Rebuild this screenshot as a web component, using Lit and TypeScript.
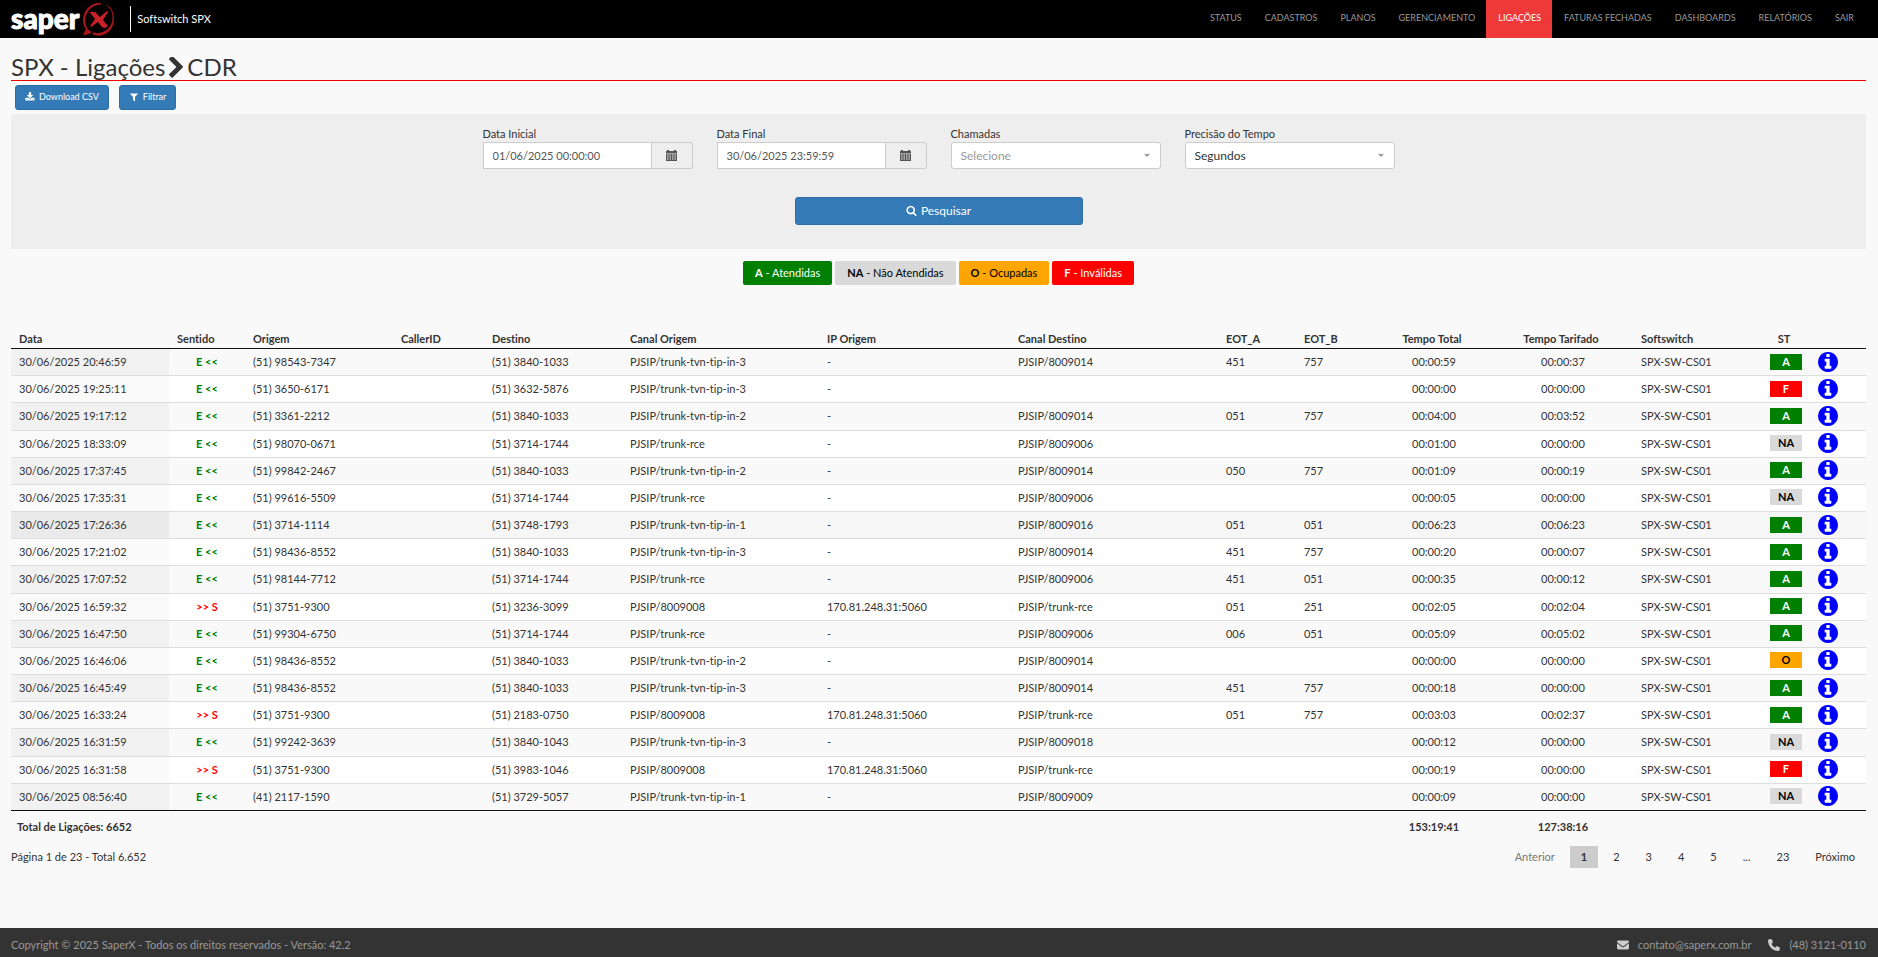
import { LitElement, html, css, svg } from "lit";
import { customElement, state } from "lit/decorators.js";
import { classMap } from "lit/directives/class-map.js";
import { styleMap } from "lit/directives/style-map.js";

type Status = "A" | "NA" | "O" | "F";

interface Call {
  date: string;
  out: boolean;
  from: string;
  to: string;
  channelFrom: string;
  ip: string;
  channelTo: string;
  eotA: string;
  eotB: string;
  total: string;
  billed: string;
  status: Status;
}

const NAV = [
  "Status",
  "Cadastros",
  "Planos",
  "Gerenciamento",
  "Ligações",
  "Faturas Fechadas",
  "Dashboards",
  "Relatórios",
  "Sair",
];

/* Heading, relative width and header alignment of each table column. */
const COLUMNS: Array<{ label: string; weight: number; center?: boolean }> = [
  { label: "Data", weight: 158 },
  { label: "Sentido", weight: 76 },
  { label: "Origem", weight: 148 },
  { label: "CallerID", weight: 91 },
  { label: "Destino", weight: 138 },
  { label: "Canal Origem", weight: 197 },
  { label: "IP Origem", weight: 191 },
  { label: "Canal Destino", weight: 208 },
  { label: "EOT_A", weight: 78 },
  { label: "EOT_B", weight: 79 },
  { label: "Tempo Total", weight: 118, center: true },
  { label: "Tempo Tarifado", weight: 140, center: true },
  { label: "Softswitch", weight: 129 },
  { label: "ST", weight: 48, center: true },
  { label: "", weight: 56 },
];
const TOTAL_WEIGHT = COLUMNS.reduce((sum, c) => sum + c.weight, 0);

const row = (
  time: string,
  out: boolean,
  from: string,
  to: string,
  channelFrom: string,
  channelTo: string,
  eotA: string,
  eotB: string,
  total: string,
  billed: string,
  status: Status
): Call => ({
  date: `30/06/2025 ${time}`,
  out,
  from,
  to,
  channelFrom: `PJSIP/${channelFrom}`,
  ip: out ? "170.81.248.31:5060" : "-",
  channelTo: channelTo ? `PJSIP/${channelTo}` : "",
  eotA,
  eotB,
  total,
  billed,
  status,
});

const CALLS: Call[] = [
  row("20:46:59", false, "(51) 98543-7347", "(51) 3840-1033", "trunk-tvn-tip-in-3", "8009014", "451", "757", "00:00:59", "00:00:37", "A"),
  row("19:25:11", false, "(51) 3650-6171", "(51) 3632-5876", "trunk-tvn-tip-in-3", "", "", "", "00:00:00", "00:00:00", "F"),
  row("19:17:12", false, "(51) 3361-2212", "(51) 3840-1033", "trunk-tvn-tip-in-2", "8009014", "051", "757", "00:04:00", "00:03:52", "A"),
  row("18:33:09", false, "(51) 98070-0671", "(51) 3714-1744", "trunk-rce", "8009006", "", "", "00:01:00", "00:00:00", "NA"),
  row("17:37:45", false, "(51) 99842-2467", "(51) 3840-1033", "trunk-tvn-tip-in-2", "8009014", "050", "757", "00:01:09", "00:00:19", "A"),
  row("17:35:31", false, "(51) 99616-5509", "(51) 3714-1744", "trunk-rce", "8009006", "", "", "00:00:05", "00:00:00", "NA"),
  row("17:26:36", false, "(51) 3714-1114", "(51) 3748-1793", "trunk-tvn-tip-in-1", "8009016", "051", "051", "00:06:23", "00:06:23", "A"),
  row("17:21:02", false, "(51) 98436-8552", "(51) 3840-1033", "trunk-tvn-tip-in-3", "8009014", "451", "757", "00:00:20", "00:00:07", "A"),
  row("17:07:52", false, "(51) 98144-7712", "(51) 3714-1744", "trunk-rce", "8009006", "451", "051", "00:00:35", "00:00:12", "A"),
  row("16:59:32", true, "(51) 3751-9300", "(51) 3236-3099", "8009008", "trunk-rce", "051", "251", "00:02:05", "00:02:04", "A"),
  row("16:47:50", false, "(51) 99304-6750", "(51) 3714-1744", "trunk-rce", "8009006", "006", "051", "00:05:09", "00:05:02", "A"),
  row("16:46:06", false, "(51) 98436-8552", "(51) 3840-1033", "trunk-tvn-tip-in-2", "8009014", "", "", "00:00:00", "00:00:00", "O"),
  row("16:45:49", false, "(51) 98436-8552", "(51) 3840-1033", "trunk-tvn-tip-in-3", "8009014", "451", "757", "00:00:18", "00:00:00", "A"),
  row("16:33:24", true, "(51) 3751-9300", "(51) 2183-0750", "8009008", "trunk-rce", "051", "757", "00:03:03", "00:02:37", "A"),
  row("16:31:59", false, "(51) 99242-3639", "(51) 3840-1043", "trunk-tvn-tip-in-3", "8009018", "", "", "00:00:12", "00:00:00", "NA"),
  row("16:31:58", true, "(51) 3751-9300", "(51) 3983-1046", "8009008", "trunk-rce", "", "", "00:00:19", "00:00:00", "F"),
  row("08:56:40", false, "(41) 2117-1590", "(51) 3729-5057", "trunk-tvn-tip-in-1", "8009009", "", "", "00:00:09", "00:00:00", "NA"),
];

const LEGEND: Array<{ code: Status; label: string }> = [
  { code: "A", label: "Atendidas" },
  { code: "NA", label: "Não Atendidas" },
  { code: "O", label: "Ocupadas" },
  { code: "F", label: "Inválidas" },
];

const ICONS: Record<string, { box: string; d: string }> = {
  download: {
    box: "0 0 1792 1792",
    d: "M1344 1344q0-26-19-45t-45-19-45 19-19 45 19 45 45 19 45-19 19-45zm256 0q0-26-19-45t-45-19-45 19-19 45 19 45 45 19 45-19 19-45zm128-224v320q0 40-28 68t-68 28h-1472q-40 0-68-28t-28-68v-320q0-40 28-68t68-28h465l135 136q58 56 136 56t136-56l136-136h464q40 0 68 28t28 68zm-325-569q17 41-14 70l-448 448q-18 19-45 19t-45-19l-448-448q-31-29-14-70 17-39 59-39h256v-448q0-26 19-45t45-19h256q26 0 45 19t19 45v448h256q42 0 59 39z",
  },
  filter: {
    box: "0 0 1792 1792",
    d: "M1595 295q17 41-14 70l-493 493v742q0 42-39 59-13 5-25 5-27 0-45-19l-256-256q-19-19-19-45v-486l-493-493q-31-29-14-70 17-39 59-39h1280q42 0 59 39z",
  },
  search: {
    box: "0 0 1792 1792",
    d: "M1216 832q0-185-131.500-316.500t-316.500-131.500-316.500 131.500-131.500 316.500 131.500 316.500 316.500 131.500 316.500-131.500 131.500-316.500zm512 832q0 52-38 90t-90 38q-54 0-90-38l-343-342q-179 124-399 124-143 0-273.500-55.500t-225-150-150-225-55.500-273.500 55.500-273.500 150-225 225-150 273.500-55.500 273.500 55.500 225 150 150 225 55.500 273.500q0 220-124 399l343 343q37 37 37 90z",
  },
  chevron: {
    box: "346 100 1036 1556",
    d: "M1363 877l-742 742q-19 19-45 19t-45-19l-166-166q-19-19-19-45t19-45l531-531-531-531q-19-19-19-45t19-45l166-166q19-19 45-19t45 19l742 742q19 19 19 45t-19 45z",
  },
  info: {
    box: "128 128 1536 1536",
    d: "M1152 1376v-160q0-14-9-23t-23-9h-96v-512q0-14-9-23t-23-9h-320q-14 0-23 9t-9 23v160q0 14 9 23t23 9h96v320h-96q-14 0-23 9t-9 23v160q0 14 9 23t23 9h448q14 0 23-9t9-23zm-128-896v-160q0-14-9-23t-23-9h-192q-14 0-23 9t-9 23v160q0 14 9 23t23 9h192q14 0 23-9t9-23zm640 416q0 209-103 385.500t-279.500 279.500-385.500 103-385.500-103-279.500-279.500-103-385.500 103-385.500 279.500-279.500 385.500-103 385.500 103 279.500 279.500 103 385.500z",
  },
  calendar: {
    box: "0 0 11 11",
    d: "M0 1h1V0h2v1h5V0h2v1h1v2H0zM0 3.500h11V11H0zM1 4.500v1h1.500v-1zm2.500 0v1H5v-1zm2.500 0v1h1.500v-1zm2.500 0v1H10v-1zM1 6.500v1h1.500v-1zm2.500 0v1H5v-1zm2.500 0v1h1.500v-1zm2.500 0v1H10v-1zM1 8.500v1h1.500v-1zm2.500 0v1H5v-1zm2.500 0v1h1.500v-1zm2.500 0v1H10v-1z",
  },
  envelope: {
    box: "0 0 512 512",
    d: "M48 64C21.500 64 0 85.500 0 112c0 15.100 7.100 29.300 19.200 38.400L236.800 313.600c11.400 8.500 27 8.500 38.400 0L492.800 150.400c12.100-9.100 19.200-23.300 19.200-38.400c0-26.500-21.500-48-48-48H48zM0 176V384c0 35.300 28.700 64 64 64H448c35.300 0 64-28.700 64-64V176L294.400 339.200c-22.800 17.100-54 17.100-76.800 0L0 176z",
  },
  phone: {
    box: "0 0 512 512",
    d: "M164.900 24.600c-7.700-18.600-28-28.500-47.400-23.200l-88 24C12.100 30.200 0 46 0 64C0 311.400 200.600 512 448 512c18 0 33.800-12.100 38.600-29.500l24-88c5.300-19.400-4.600-39.700-23.200-47.400l-96-40c-16.300-6.800-35.200-2.100-46.300 11.600L304.700 368C234.300 334.700 177.300 277.700 144 207.300L193.300 167c13.700-11.200 18.400-30 11.600-46.300l-40-96z",
  },
};

const icon = (name: string) => html`<svg
  class="icon icon-${name}"
  viewBox=${ICONS[name].box}
  aria-hidden="true"
>
  ${svg`<path fill-rule="evenodd" d=${ICONS[name].d}></path>`}
</svg>`;

@customElement("app-root")
export class AppRoot extends LitElement {
  @state() private page = 1;
  @state() private highlighted = 6;

  static styles = css`
    :host {
      display: flex;
      flex-direction: column;
      min-height: 100vh;
      background: #f9f9f9;
      color: #333;
      font: 11px/17px Lato, "Open Sans", sans-serif;
      font-variant-ligatures: none;
    }
    *,
    *::before {
      box-sizing: border-box;
    }
    a {
      color: inherit;
      text-decoration: none;
    }
    button,
    input,
    select {
      font: inherit;
      margin: 0;
    }
    .icon {
      width: 12px;
      height: 12px;
      fill: currentColor;
      flex: none;
    }

    .topbar {
      display: flex;
      align-items: stretch;
      justify-content: space-between;
      height: 38px;
      padding: 0 13px 0 11px;
      background: #000;
      color: #fff;
    }
    .brand {
      display: flex;
      align-items: center;
    }
    .wordmark {
      font: 900 28px/32px Lato, sans-serif;
      -webkit-text-stroke: 1px #fff;
      margin-bottom: 2px;
    }
    .emblem {
      width: 32px;
      height: 34px;
      margin-left: 3px;
    }
    .product {
      margin-left: 16px;
      padding: 4px 0 5px 6px;
      border-left: 1px solid #fff;
    }
    .nav {
      display: flex;
      text-transform: uppercase;
      font-size: 9px;
      color: #999;
    }
    .nav a {
      display: flex;
      align-items: center;
      padding: 0 11px 3px 12px;
    }
    .nav a.active {
      background: #ef3939;
      color: #fff;
    }

    main {
      flex: 1;
      display: flex;
      flex-direction: column;
      padding: 16px 12px 60px 11px;
    }
    h1 {
      display: flex;
      align-items: center;
      gap: 4px;
      margin: 0;
      border-bottom: 1px solid #e00;
      font-size: 24px;
      line-height: 26px;
      font-weight: 400;
    }
    .icon-chevron {
      width: 14px;
      height: 21px;
    }
    .actions {
      display: flex;
      gap: 10px;
      padding: 4px;
    }
    .btn {
      display: inline-flex;
      align-items: center;
      justify-content: center;
      gap: 4px;
      padding: 0 9px 2px;
      border: 1px solid #2e6da4;
      border-radius: 3px;
      background: #337ab7;
      color: #fff;
      cursor: pointer;
    }
    .btn-small {
      height: 25px;
      font-size: 9px;
    }
    .icon-download,
    .icon-filter {
      width: 10px;
      height: 10px;
    }

    .filters {
      display: flex;
      flex-direction: column;
      align-items: center;
      gap: 28px;
      padding: 11px 16px 24px;
      background: #eee;
    }
    .fields {
      display: flex;
      flex-wrap: wrap;
      justify-content: center;
      gap: 12px 24px;
    }
    .field {
      width: 210px;
    }
    .field label {
      display: block;
    }
    .group {
      display: flex;
      height: 27px;
    }
    .group input,
    .group select {
      flex: 1;
      min-width: 0;
      padding: 0 9px;
      border: 1px solid #ccc;
      background: #fff;
      color: #555;
      outline: none;
      appearance: none;
      border-radius: 0;
    }
    .group select {
      border-radius: 3px;
      color: #333;
      font-size: 12px;
      background: #fff
        url("data:image/svg+xml,%3Csvg xmlns='http://www.w3.org/2000/svg' viewBox='0 0 6 3'%3E%3Cpath fill='%23999' d='M0 0h6L3 3z'/%3E%3C/svg%3E")
        no-repeat right 10px top 11px / 6px 3px;
    }
    .group select.empty {
      color: #999;
    }
    .addon {
      display: flex;
      align-items: center;
      justify-content: center;
      width: 41px;
      padding: 0;
      border: 1px solid #ccc;
      border-left: 0;
      border-radius: 0 3px 3px 0;
      background: #eee;
      color: #555;
    }
    .icon-calendar {
      width: 11px;
      height: 11px;
    }
    .btn-search {
      width: 288px;
      height: 28px;
      font-size: 12px;
    }
    .btn-search .icon {
      width: 11px;
      height: 11px;
    }

    .legend {
      display: flex;
      justify-content: center;
      gap: 3px;
      margin: 0;
      padding: 12px 0 44px;
      list-style: none;
    }
    .legend li {
      padding: 3px 12px 4px;
      border-radius: 2px;
    }
    .st-A {
      background: #008000;
      color: #fff;
    }
    .st-NA {
      background: #d9d9d9;
      color: #000;
    }
    .st-O {
      background: #ffa500;
      color: #000;
    }
    .st-F {
      background: #f00;
      color: #fff;
    }

    table {
      flex: 1;
      width: 100%;
      table-layout: fixed;
      border-collapse: separate;
      border-spacing: 0;
    }
    th,
    td {
      height: 27px;
      padding: 0 8px;
      text-align: left;
      white-space: nowrap;
    }
    thead th {
      height: 20px;
      padding: 0 12px 0 8px;
      border-bottom: 1px solid #111;
      vertical-align: middle;
    }
    tbody td {
      padding-bottom: 1px;
      background: #fff;
      border-bottom: 1px solid #ddd;
    }
    tbody tr:last-child td {
      border-bottom-color: #111;
    }
    tbody td:first-child {
      background: #fafafa;
    }
    tbody tr:nth-child(odd) td {
      background: #f9f9f9;
    }
    tbody tr:nth-child(odd) td:first-child {
      background: #f1f1f1;
    }
    tbody tr.over:nth-child(odd) td,
    tbody tr.over:nth-child(even) td {
      background: #f6f6f6;
    }
    tbody tr.over:nth-child(odd) td:first-child,
    tbody tr.over:nth-child(even) td:first-child {
      background: #eaeaea;
    }
    tfoot td {
      height: 33px;
      padding-bottom: 2px;
      font-weight: 700;
    }
    tfoot td:first-child {
      padding-left: 6px;
    }
    th.center,
    td.center {
      text-align: center;
    }
    .dir {
      font-weight: 700;
      color: #008000;
    }
    .dir.out {
      color: #f00;
    }
    .badge {
      display: block;
      height: 16px;
      line-height: 16px;
      font-weight: 700;
    }
    .details {
      display: block;
      width: 20px;
      height: 20px;
      padding: 0;
      border: 0;
      border-radius: 50%;
      background: #fff;
      color: #00f;
      cursor: pointer;
    }
    .details .icon {
      display: block;
      width: 20px;
      height: 20px;
    }

    .pager {
      display: flex;
      justify-content: space-between;
      padding-top: 2px;
    }
    .pager p {
      margin: 0;
      padding-top: 2px;
    }
    .pages {
      display: flex;
      gap: 4px;
    }
    .pages button,
    .pages span {
      height: 22px;
      padding: 0 11px;
      border: 0;
      background: none;
      color: #333;
      line-height: 22px;
    }
    .pages button:disabled {
      color: #777;
    }
    .pages button.current {
      background: #ccc;
      font-weight: 700;
    }

    footer {
      display: flex;
      align-items: center;
      justify-content: space-between;
      height: 29px;
      padding: 4px 12px 0 11px;
      background: #333;
      color: #999;
    }
    .contacts {
      display: flex;
      gap: 17px;
    }
    .contacts a {
      display: flex;
      align-items: center;
      gap: 9px;
    }
    .contacts .icon {
      color: #ccc;
    }
  `;

  private dateField(id: string, label: string, value: string) {
    return html`<div class="field">
      <label for=${id}>${label}</label>
      <div class="group">
        <input id=${id} type="text" .value=${value} />
        <button class="addon" type="button" aria-label="Abrir calendário">
          ${icon("calendar")}
        </button>
      </div>
    </div>`;
  }

  private callRow(c: Call, i: number) {
    return html`<tr
      class=${classMap({ over: i === this.highlighted })}
      @mouseenter=${() => (this.highlighted = i)}
    >
      <td>${c.date}</td>
      <td class="center">
        <span class=${classMap({ dir: true, out: c.out })}>${c.out ? ">> S" : "E <<"}</span>
      </td>
      <td>${c.from}</td>
      <td></td>
      <td>${c.to}</td>
      <td>${c.channelFrom}</td>
      <td>${c.ip}</td>
      <td>${c.channelTo}</td>
      <td>${c.eotA}</td>
      <td>${c.eotB}</td>
      <td class="center">${c.total}</td>
      <td class="center">${c.billed}</td>
      <td>SPX-SW-CS01</td>
      <td class="center"><span class="badge st-${c.status}">${c.status}</span></td>
      <td>
        <button class="details" type="button" aria-label="Detalhes">${icon("info")}</button>
      </td>
    </tr>`;
  }

  private pageButton(n: number) {
    return html`<button
      type="button"
      class=${classMap({ current: this.page === n })}
      @click=${() => (this.page = n)}
    >${n}</button>`;
  }

  render() {
    return html`
      <header class="topbar">
        <div class="brand">
          <span class="wordmark">saper</span>
          <svg class="emblem" viewBox="0 0 32 34" aria-hidden="true">
            <path
              fill="#a5161c"
              d="M19 1C9 0 1 8 1 18c0 4 1 7 3 9L1 33c4 0 7-1 9-3C5 28 3 23 3.500 17 4 9 10 3 19 2.500zM23 2c6 4 8 9 7.500 15C30 25 23 31 15 31c-1 0-2 0-3-1l-2 2c3 1.500 6 2 9 1.500C27 32 32 25 32 17 32 10 29 4 23 2z"
            />
            <path
              fill="#c8202a"
              d="M8 10c4-1 6 0 8 3l2 2 7-6 1 1-5 8 5 6-3 2c-2 0-3-1-4-2l-3-4-7 5-1-1 5-7-4-5c-1-1-1-1-1-2z"
            />
          </svg>
          <span class="product">Softswitch SPX</span>
        </div>
        <nav class="nav">
          ${NAV.map(
            (item) =>
              html`<a href="#" class=${classMap({ active: item === "Ligações" })}>${item}</a>`
          )}
        </nav>
      </header>

      <main>
        <h1>SPX - Ligações ${icon("chevron")} CDR</h1>
        <div class="actions">
          <button class="btn btn-small" type="button">${icon("download")}Download CSV</button>
          <button class="btn btn-small" type="button">${icon("filter")}Filtrar</button>
        </div>

        <form class="filters" @submit=${(e: Event) => e.preventDefault()}>
          <div class="fields">
            ${this.dateField("start", "Data Inicial", "01/06/2025 00:00:00")}
            ${this.dateField("end", "Data Final", "30/06/2025 23:59:59")}
            <div class="field">
              <label for="calls">Chamadas</label>
              <div class="group">
                <select id="calls" class="empty">
                  <option>Selecione</option>
                </select>
              </div>
            </div>
            <div class="field">
              <label for="precision">Precisão do Tempo</label>
              <div class="group">
                <select id="precision">
                  <option>Segundos</option>
                </select>
              </div>
            </div>
          </div>
          <button class="btn btn-search" type="submit">${icon("search")}Pesquisar</button>
        </form>

        <ul class="legend">
          ${LEGEND.map(
            (l) => html`<li class="st-${l.code}"><b>${l.code}</b> - ${l.label}</li>`
          )}
        </ul>

        <table>
          <colgroup>
            ${COLUMNS.map(
              (c) => html`<col style=${styleMap({ width: `${(c.weight / TOTAL_WEIGHT) * 100}%` })} />`
            )}
          </colgroup>
          <thead>
            <tr>
              ${COLUMNS.map(
                (c) => html`<th class=${classMap({ center: !!c.center })}>${c.label}</th>`
              )}
            </tr>
          </thead>
          <tbody>
            ${CALLS.map((c, i) => this.callRow(c, i))}
          </tbody>
          <tfoot>
            <tr>
              <td colspan="10">Total de Ligações: 6652</td>
              <td class="center">153:19:41</td>
              <td class="center">127:38:16</td>
              <td colspan="3"></td>
            </tr>
          </tfoot>
        </table>

        <div class="pager">
          <p>Página 1 de 23 - Total 6.652</p>
          <div class="pages">
            <button type="button" disabled>Anterior</button>
            ${[1, 2, 3, 4, 5].map((n) => this.pageButton(n))}
            <span>...</span>
            ${this.pageButton(23)}
            <button type="button">Próximo</button>
          </div>
        </div>
      </main>

      <footer>
        <span>Copyright © 2025 SaperX - Todos os direitos reservados - Versão: 42.2</span>
        <div class="contacts">
          <a href="mailto:contato@saperx.com.br">${icon("envelope")}contato@saperx.com.br</a>
          <a href="tel:+554831210110">${icon("phone")}(48) 3121-0110</a>
        </div>
      </footer>
    `;
  }
}
